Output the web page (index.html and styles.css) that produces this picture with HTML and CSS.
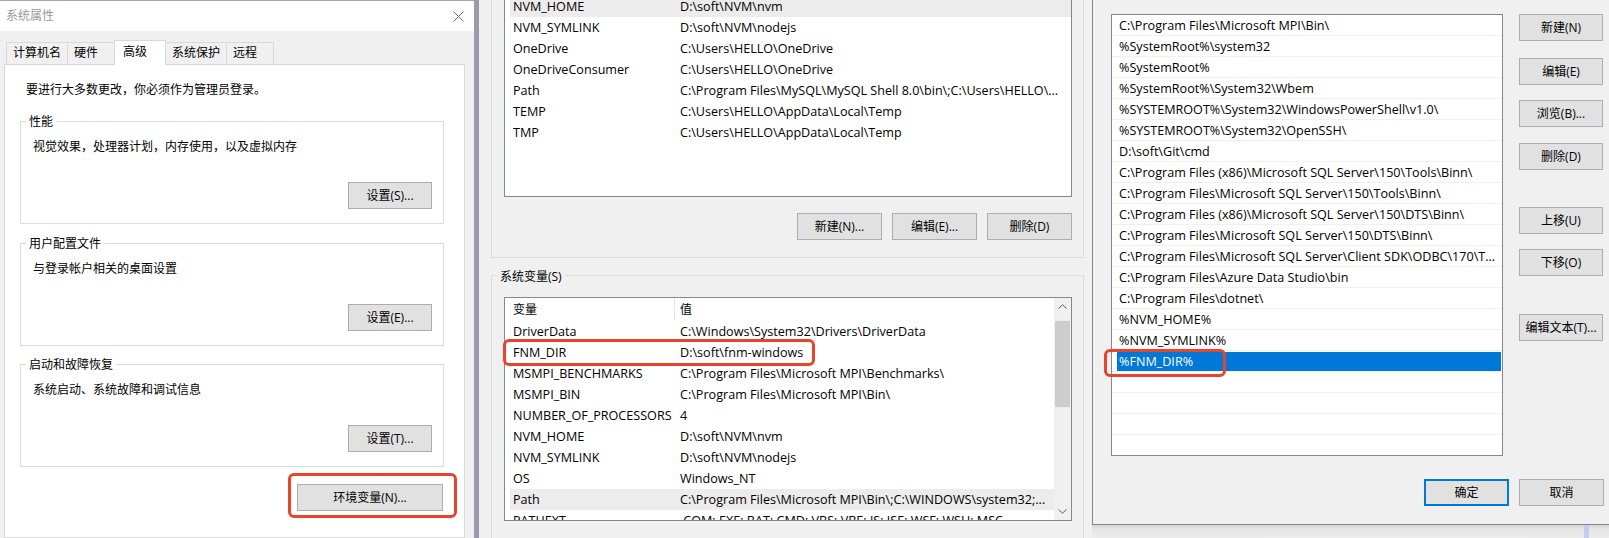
FILE: index.html
```html
<!DOCTYPE html>
<html lang="zh-CN">
<head>
<meta charset="utf-8">
<title>环境变量</title>
<link rel="stylesheet" href="styles.css">
</head>
<body>
<div class="desk">
  <section class="sysprop">
    <header class="titlebar">
      <span class="title">系统属性</span>
      <svg class="close" width="11" height="11" viewBox="0 0 11 11"><path d="M0.5 0.5 L10.5 10.5 M10.5 0.5 L0.5 10.5" stroke="#707070" stroke-width="1" fill="none"/></svg>
    </header>
    <div class="sp-body">
      <div class="tabs">
        <div class="tab">计算机名</div>
        <div class="tab">硬件</div>
        <div class="tab active">高级</div>
        <div class="tab">系统保护</div>
        <div class="tab">远程</div>
      </div>
      <div class="tabpanel">
        <p class="note">要进行大多数更改，你必须作为管理员登录。</p>
        <div class="group g1">
          <span class="legend">性能</span>
          <p class="desc">视觉效果，处理器计划，内存使用，以及虚拟内存</p>
          <button class="btn set">设置(S)...</button>
        </div>
        <div class="group g2">
          <span class="legend">用户配置文件</span>
          <p class="desc">与登录帐户相关的桌面设置</p>
          <button class="btn set">设置(E)...</button>
        </div>
        <div class="group g3">
          <span class="legend">启动和故障恢复</span>
          <p class="desc">系统启动、系统故障和调试信息</p>
          <button class="btn set">设置(T)...</button>
        </div>
        <div class="envrow">
          <div class="envwrap">
            <button class="btn env">环境变量(N)...</button>
            <span class="mark m-env"></span>
          </div>
        </div>
      </div>
    </div>
  </section>

  <section class="envvars">
    <div class="ugroup">
      <div class="ulist">
        <div class="row hl"><span class="c1">NVM_HOME</span><span class="c2">D:\soft\NVM\nvm</span></div>
        <div class="row"><span class="c1">NVM_SYMLINK</span><span class="c2">D:\soft\NVM\nodejs</span></div>
        <div class="row"><span class="c1">OneDrive</span><span class="c2">C:\Users\HELLO\OneDrive</span></div>
        <div class="row"><span class="c1">OneDriveConsumer</span><span class="c2">C:\Users\HELLO\OneDrive</span></div>
        <div class="row"><span class="c1">Path</span><span class="c2">C:\Program Files\MySQL\MySQL Shell 8.0\bin\;C:\Users\HELLO\...</span></div>
        <div class="row"><span class="c1">TEMP</span><span class="c2">C:\Users\HELLO\AppData\Local\Temp</span></div>
        <div class="row"><span class="c1">TMP</span><span class="c2">C:\Users\HELLO\AppData\Local\Temp</span></div>
      </div>
      <div class="btnrow">
        <button class="btn w85">新建(N)...</button>
        <button class="btn w85">编辑(E)...</button>
        <button class="btn w85">删除(D)</button>
      </div>
    </div>
    <div class="sgroup">
      <span class="legend">系统变量(S)</span>
      <div class="listbox">
        <div class="slist">
          <div class="lmain">
            <div class="lhead"><span class="h1">变量</span><span class="h2">值</span></div>
            <div class="row"><span class="c1">DriverData</span><span class="c2">C:\Windows\System32\Drivers\DriverData</span></div>
            <div class="row"><span class="c1">FNM_DIR</span><span class="c2">D:\soft\fnm-windows</span></div>
            <div class="row"><span class="c1">MSMPI_BENCHMARKS</span><span class="c2">C:\Program Files\Microsoft MPI\Benchmarks\</span></div>
            <div class="row"><span class="c1">MSMPI_BIN</span><span class="c2">C:\Program Files\Microsoft MPI\Bin\</span></div>
            <div class="row"><span class="c1">NUMBER_OF_PROCESSORS</span><span class="c2">4</span></div>
            <div class="row"><span class="c1">NVM_HOME</span><span class="c2">D:\soft\NVM\nvm</span></div>
            <div class="row"><span class="c1">NVM_SYMLINK</span><span class="c2">D:\soft\NVM\nodejs</span></div>
            <div class="row"><span class="c1">OS</span><span class="c2">Windows_NT</span></div>
            <div class="row hl"><span class="c1">Path</span><span class="c2">C:\Program Files\Microsoft MPI\Bin\;C:\WINDOWS\system32;...</span></div>
            <div class="row"><span class="c1">PATHEXT</span><span class="c2">.COM;.EXE;.BAT;.CMD;.VBS;.VBE;.JS;.JSE;.WSF;.WSH;.MSC</span></div>
          </div>
          <div class="vscroll">
            <span class="arrow"><svg width="9" height="5" viewBox="0 0 9 5"><path d="M0.5 4.5 L4.5 0.8 L8.5 4.5" stroke="#606060" fill="none"/></svg></span>
            <span class="thumb"></span>
            <span class="arrow down"><svg width="9" height="5" viewBox="0 0 9 5"><path d="M0.5 0.5 L4.5 4.2 L8.5 0.5" stroke="#606060" fill="none"/></svg></span>
          </div>
        </div>
        <span class="mark m-fnm"></span>
      </div>
    </div>
  </section>

  <section class="editvar">
    <div class="dlg">
      <div class="top">
        <div class="plist">
          <div class="plist-inner">
            <div class="prow"><span class="t">C:\Program Files\Microsoft MPI\Bin\</span></div>
            <div class="prow"><span class="t">%SystemRoot%\system32</span></div>
            <div class="prow"><span class="t">%SystemRoot%</span></div>
            <div class="prow"><span class="t">%SystemRoot%\System32\Wbem</span></div>
            <div class="prow"><span class="t">%SYSTEMROOT%\System32\WindowsPowerShell\v1.0\</span></div>
            <div class="prow"><span class="t">%SYSTEMROOT%\System32\OpenSSH\</span></div>
            <div class="prow"><span class="t">D:\soft\Git\cmd</span></div>
            <div class="prow"><span class="t">C:\Program Files (x86)\Microsoft SQL Server\150\Tools\Binn\</span></div>
            <div class="prow"><span class="t">C:\Program Files\Microsoft SQL Server\150\Tools\Binn\</span></div>
            <div class="prow"><span class="t">C:\Program Files (x86)\Microsoft SQL Server\150\DTS\Binn\</span></div>
            <div class="prow"><span class="t">C:\Program Files\Microsoft SQL Server\150\DTS\Binn\</span></div>
            <div class="prow"><span class="t">C:\Program Files\Microsoft SQL Server\Client SDK\ODBC\170\T...</span></div>
            <div class="prow"><span class="t">C:\Program Files\Azure Data Studio\bin</span></div>
            <div class="prow"><span class="t">C:\Program Files\dotnet\</span></div>
            <div class="prow"><span class="t">%NVM_HOME%</span></div>
            <div class="prow"><span class="t">%NVM_SYMLINK%</span></div>
            <div class="prow sel"><span class="t">%FNM_DIR%</span></div>
            <div class="prow"><span class="t"></span></div>
            <div class="prow"><span class="t"></span></div>
            <div class="prow"><span class="t"></span></div>
            <div class="prow"><span class="t"></span></div>
          </div>
          <span class="mark m-pfnm"></span>
        </div>
        <div class="side">
          <button class="btn b-new">新建(N)</button>
          <button class="btn b-edit">编辑(E)</button>
          <button class="btn b-browse">浏览(B)...</button>
          <button class="btn b-del">删除(D)</button>
          <button class="btn b-up">上移(U)</button>
          <button class="btn b-down">下移(O)</button>
          <button class="btn b-text">编辑文本(T)...</button>
        </div>
      </div>
      <div class="bottom">
        <button class="btn w85 ok">确定</button>
        <button class="btn w85">取消</button>
      </div>
    </div>
    <div class="under"><span class="stripe"></span></div>
  </section>
</div>
</body>
</html>
```

FILE: styles.css
```css
* { box-sizing: border-box; margin: 0; padding: 0; }
html, body { width: 1609px; height: 538px; overflow: hidden; }
body {
  font-family: "Open Sans", "Noto Sans CJK SC", sans-serif;
  font-size: 12px;
  line-height: 16px;
  color: #000;
  background: #f0f0f0;
}
.desk { display: flex; height: 538px; }

/* generic button */
.btn {
  display: block;
  font: inherit;
  height: 27px;
  line-height: 25px;
  padding: 0;
  background: #e1e1e1;
  border: 1px solid #adadad;
  color: #000;
  text-align: center;
  white-space: nowrap;
}
.w85 { width: 85px; }

/* red annotation marks */
.mark {
  position: absolute;
  border: 3px solid #e8442d;
  border-radius: 6px;
  pointer-events: none;
}

/* ---------- panel 1: 系统属性 ---------- */
.sysprop {
  width: 474px;
  flex: none;
  display: flex;
  flex-direction: column;
  background: #f0f0f0;
  border-top: 1px solid #a9a9a9;
}
.titlebar {
  height: 30px;
  background: #fff;
  display: flex;
  align-items: center;
  justify-content: space-between;
  padding: 0 10px 0 6px;
}
.title { color: #9a9a9a; line-height: 16px; }
.close { display: block; }
.sp-body { flex: 1; padding-top: 11px; display: flex; flex-direction: column; }
.tabs { display: flex; align-items: flex-end; height: 22px; margin-left: 6px; }
.tab {
  height: 22px;
  min-width: 48px;
  padding: 0 6px;
  line-height: 20px;
  background: #f0f0f0;
  border: 1px solid #d9d9d9;
  border-bottom: 0;
  margin-left: -1px;
  white-space: nowrap;
}
.tab:first-child { margin-left: 0; }
.tab.active {
  position: relative;
  z-index: 2;
  height: 25px;
  min-width: 52px;
  padding-left: 8px;
  margin-bottom: -1px;
  background: #fff;
  line-height: 22px;
}
.tabpanel {
  flex: 1;
  width: 461px;
  margin-left: 4px;
  background: #fff;
  border: 1px solid #d9d9d9;
  padding: 17px 0 0 15px;
  display: flex;
  flex-direction: column;
}
.note { margin-left: 6px; line-height: 16px; }
.group {
  width: 424px;
  height: 103px;
  border: 1px solid #dcdcdc;
  padding: 0 11px 14px 12px;
  display: flex;
  flex-direction: column;
}
.g1 { margin-top: 23px; }
.g2 { margin-top: 19px; }
.g3 { margin-top: 18px; }
.legend {
  align-self: flex-start;
  margin: -8px 0 0 -7px;
  padding: 0 3px;
  background: #fff;
  line-height: 16px;
}
.desc { margin-top: 9px; line-height: 16px; }
.set { width: 84px; margin-top: auto; align-self: flex-end; }
.envrow { width: 424px; margin-top: 17px; display: flex; justify-content: flex-end; }
.envwrap { position: relative; width: 146px; margin-right: 1px; }
.env { width: 146px; }
.m-env { left: -9px; right: -14px; top: -11px; bottom: -7px; }

/* ---------- panel 2: 环境变量 ---------- */
.envvars {
  width: 618px;
  flex: none;
  background: #f0f0f0;
  border-left: 5px solid #9b9bb0;
  padding: 0 8px 0 12px;
  display: flex;
  flex-direction: column;
}
.ugroup {
  height: 258px;
  border: 1px solid #dcdcdc;
  border-top: 0;
  padding: 0 11px 0 12px;
}
.ulist {
  height: 197px;
  background: #fff;
  border: 1px solid #828790;
  border-top: 0;
  overflow: hidden;
}
.ulist .row:first-child { margin-top: -4px; }
.row {
  display: flex;
  height: 21px;
  line-height: 21px;
  margin-left: 5px;
  white-space: nowrap;
  font-size: 12.6px;
}
.row.hl { background: #ececec; }
.c1 { width: 164px; flex: none; padding-left: 3px; overflow: hidden; }
.c2 { flex: 1; min-width: 0; padding-left: 6px; overflow: hidden; }
.btnrow { display: flex; justify-content: flex-end; gap: 10px; margin-top: 16px; }

.sgroup {
  flex: 1;
  margin-top: 17px;
  border: 1px solid #dcdcdc;
  border-bottom: 0;
  padding: 0 11px 0 12px;
  display: flex;
  flex-direction: column;
}
.sgroup .legend { background: #f0f0f0; margin-top: -7px; }
.listbox { position: relative; height: 224px; margin-top: 12px; }
.slist {
  display: flex;
  height: 100%;
  background: #fff;
  border: 1px solid #828790;
  overflow: hidden;
}
.lmain { flex: 1; min-width: 0; overflow: hidden; }
.lhead { display: flex; height: 23px; line-height: 23px; }
.h1 { width: 170px; padding-left: 8px; border-right: 1px solid #e5e5e5; }
.h2 { padding-left: 5px; }
.vscroll {
  width: 17px;
  flex: none;
  background: #f0f0f0;
  display: flex;
  flex-direction: column;
  align-items: center;
}
.arrow { height: 17px; display: flex; align-items: center; justify-content: center; }
.arrow svg { display: block; }
.thumb { width: 15px; height: 86px; margin-top: 6px; background: #cdcdcd; }
.arrow.down { margin-top: auto; }
.m-fnm { left: -1px; top: 42px; width: 312px; height: 27px; }

/* ---------- panel 3: 编辑环境变量 ---------- */
.editvar { flex: 1; display: flex; flex-direction: column; }
.dlg {
  height: 525px;
  background: #f0f0f0;
  border-left: 1px solid #858585;
  border-bottom: 1px solid #858585;
  padding: 14px 0 0 18px;
  display: flex;
  flex-direction: column;
}
.top { display: flex; }
.plist { position: relative; width: 392px; height: 442px; margin-right: 16px; flex: none; }
.plist-inner {
  height: 100%;
  background: #fff;
  border: 1px solid #828790;
  overflow: hidden;
  font-size: 12.6px;
}
.prow { display: flex; height: 21px; border-bottom: 1px solid #f0f0f0; }
.prow .t {
  flex: 1;
  margin: 1px 1px 0 5px;
  padding-left: 2px;
  line-height: 19px;
  white-space: nowrap;
  overflow: hidden;
}
.prow.sel .t { background: #0078d7; color: #fff; }
.m-pfnm { left: -7px; top: 335px; width: 122px; height: 28px; }
.side { width: 84px; flex: none; display: flex; flex-direction: column; }
.side .btn { width: 84px; }
.b-edit { margin-top: 17px; }
.b-browse { margin-top: 15px; }
.b-del { margin-top: 16px; }
.b-up { margin-top: 37px; }
.b-down { margin-top: 15px; }
.b-text { margin-top: 38px; }
.bottom { display: flex; justify-content: flex-end; gap: 10px; margin-top: 23px; padding-right: 5px; }
.ok { border: 2px solid #0078d7; line-height: 23px; }
.under {
  flex: 1;
  display: flex;
  justify-content: flex-end;
  background: linear-gradient(#d4d4d4, #e6e6e6 4px, #ececec);
  padding-right: 20px;
}
.stripe { width: 5px; background: #c9c9f2; }
```
